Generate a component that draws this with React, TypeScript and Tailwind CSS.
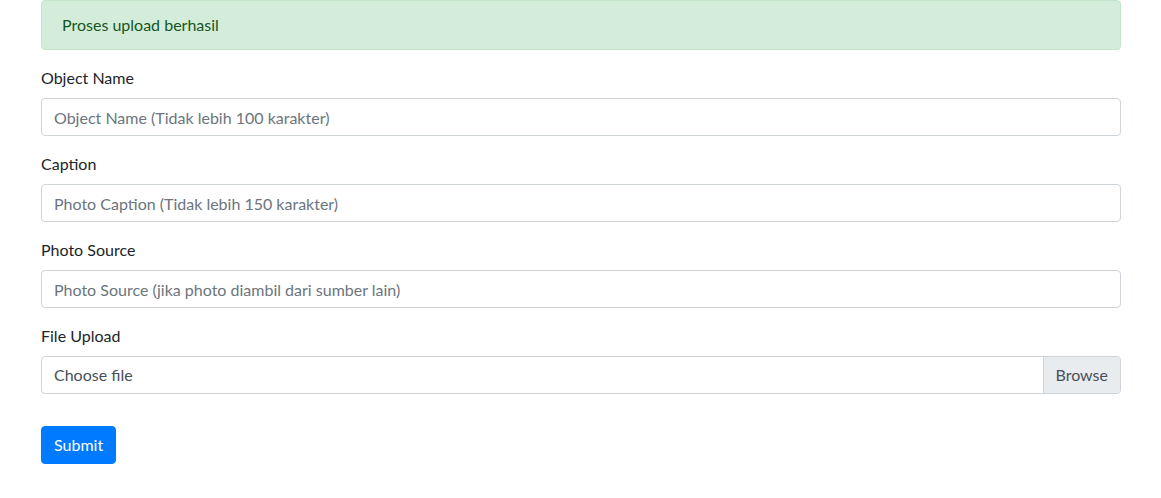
import React from "react";

export default function App() {
  const font = { fontFamily: '"Lato", sans-serif' };
  return (
    <div className="min-h-[498px] bg-white text-[#212529] text-[16px] leading-[24px]" style={font}>
      <div className="w-[1080px] ml-[41px]">
        <div className="bg-[#d4edda] border border-[#c3e6cb] text-[#155724] rounded-[4px] px-5 py-3 mb-4">
          Proses upload berhasil
        </div>
        <form onSubmit={(e) => e.preventDefault()}>
          {[
            ["Object Name", "Object Name (Tidak lebih 100 karakter)"],
            ["Caption", "Photo Caption (Tidak lebih 150 karakter)"],
            ["Photo Source", "Photo Source (jika photo diambil dari sumber lain)"],
          ].map(([label, ph]) => (
            <div key={label} className="mb-4">
              <label className="block mb-2">{label}</label>
              <input
                className="block w-full h-[38px] px-3 py-[6px] border border-[#ced4da] rounded-[4px] text-[#495057] placeholder:text-[#6c757d] outline-none"
                placeholder={ph}
                style={font}
              />
            </div>
          ))}
          <div className="mb-4">
            <label className="block mb-2">File Upload</label>
            <div className="flex h-[38px] border border-[#ced4da] rounded-[4px] text-[#495057] overflow-hidden">
              <div className="flex-1 px-3 py-[6px]">Choose file</div>
              <div className="bg-[#e9ecef] border-l border-[#ced4da] px-3 py-[6px]">Browse</div>
            </div>
          </div>
          <button
            type="submit"
            className="mt-4 h-[38px] px-3 bg-[#007bff] text-white rounded-[4px] border border-[#007bff]"
            style={font}
          >
            Submit
          </button>
        </form>
      </div>
    </div>
  );
}
